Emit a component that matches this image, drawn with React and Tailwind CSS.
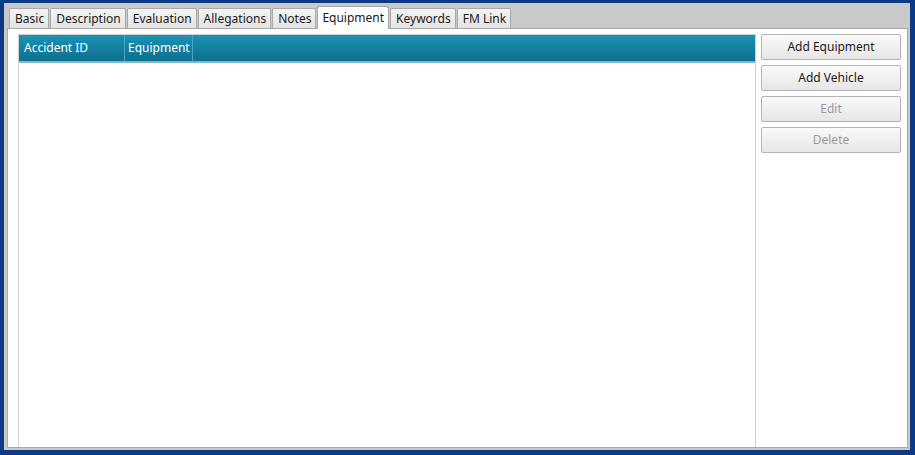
import React from 'react';

const tabs = ['Basic', 'Description', 'Evaluation', 'Allegations', 'Notes', 'Equipment', 'Keywords', 'FM Link'];

function Tab({ label, active }) {
  if (active) {
    return (
      <div className="relative z-10 -mb-px flex h-[23px] items-center rounded-t-[3px] border border-b-0 border-[#a9a9a9] bg-white px-[4px] text-[#1a1a1a]">
        {label}
      </div>
    );
  }
  return (
    <div className="flex h-[20px] items-center rounded-t-[2px] border border-b-0 border-[#a9a9a9] bg-gradient-to-b from-[#f4f4f4] to-[#e4e4e4] pl-[5px] pr-[4px] text-[#1a1a1a]">
      {label}
    </div>
  );
}

function Button({ label, disabled }) {
  return (
    <div
      className={
        'flex h-[26px] items-center justify-center rounded-[2px] border border-[#b4b4b4] bg-gradient-to-b from-[#fafafa] to-[#e6e6e6] ' +
        (disabled ? 'text-[#9a9a9a]' : 'text-[#1a1a1a]')
      }
    >
      {label}
    </div>
  );
}

export default function App() {
  return (
    <div
      className="h-[455px] w-[915px] bg-[#0c3a86] pb-[5px] pl-[4px] pr-[5px] pt-[3px] text-[12px]"
      style={{ fontFamily: '"Noto Sans", "Open Sans", sans-serif' }}
    >
      <div className="flex h-full flex-col bg-[#c9c9c9] pb-[2px] pl-[3px] pr-[2px] pt-[3px]">
        <div className="flex items-end gap-[1px] pl-[2px]">
          {tabs.map((t) => (
            <Tab key={t} label={t} active={t === 'Equipment'} />
          ))}
        </div>
        <div className="flex flex-1 border border-[#a9a9a9] bg-white pl-[10px] pr-[6px] pt-[5px]">
          <div className="flex flex-1 flex-col border-x border-t border-[#cfcfcf]">
            <div className="flex h-[28px] border-b-2 border-[#7fb7c9] bg-gradient-to-b from-[#1a93b5] to-[#0e6f8f] text-white">
              <div className="flex w-[106px] items-center border-r border-[#4aa6c2] pl-[5px]">Accident ID</div>
              <div className="flex w-[68px] items-center border-r border-[#4aa6c2] pl-[3px]">Equipment</div>
            </div>
          </div>
          <div className="ml-[5px] flex w-[140px] flex-col gap-[5px]">
            <Button label="Add Equipment" />
            <Button label="Add Vehicle" />
            <Button label="Edit" disabled />
            <Button label="Delete" disabled />
          </div>
        </div>
      </div>
    </div>
  );
}
